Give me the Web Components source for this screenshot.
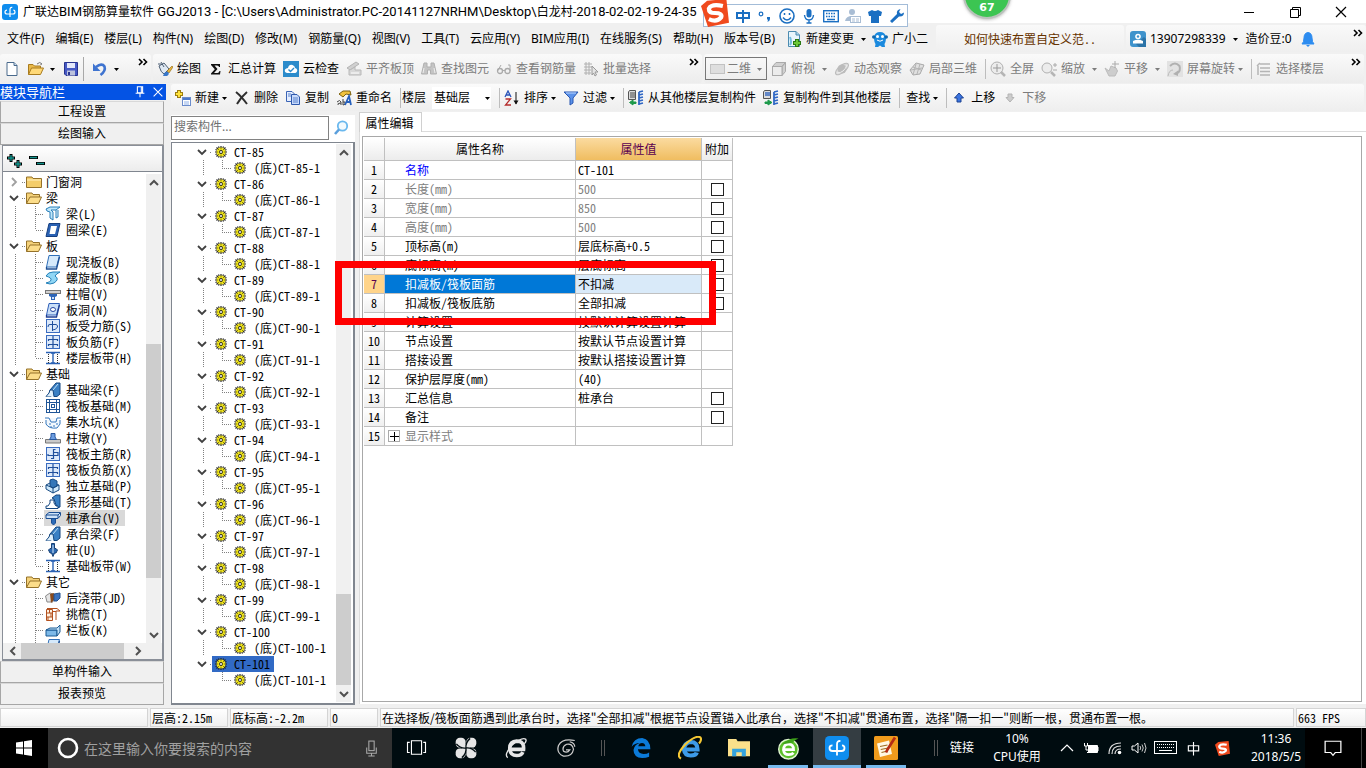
<!DOCTYPE html>
<html lang="zh-CN">
<head>
<meta charset="utf-8">
<title>广联达BIM钢筋算量软件 GGJ2013</title>
<style>
html, body { margin: 0; height: 100%; }
body { font: 12px/16px "Noto Sans", "Noto Sans CJK SC", sans-serif; color: #000; overflow: hidden; }
</style>
</head>
<body>
<app-window></app-window>
<script>
const ICONS = {
  logo: '<rect width="16" height="16" rx="3" fill="#0f8dee"/><path d="M5 6.200Q3 6.200 3 8Q3 10 5 10H11Q13 10 13 8Q13 6.200 11.300 6.200M10.300 3.400Q8 3 8 5.500V13" fill="none" stroke="#fff" stroke-width="1.200"/>',
  page: '<path d="M3 1.500H10L13 4.500V14.500H3Z" fill="#fff" stroke="#4a6a8c"/><path d="M10 1.500V4.500H13" fill="#c8dcf0" stroke="#4a6a8c"/>',
  open: '<path d="M0.500 13.500V3.500H5L6.500 5H12.500V7" fill="#e9b94a" stroke="#a87b1e"/><path d="M0.500 13.500L3.500 7H15.500L12.500 13.500Z" fill="#ffd978" stroke="#a87b1e"/><path d="M9 3Q12 0 14 3L12.500 3.500" fill="none" stroke="#777"/>',
  save: '<path d="M1.500 1.500H14.500V14.500H3L1.500 13Z" fill="#4659c4" stroke="#28338e"/><rect x="4" y="2" width="8" height="5" fill="#e4e8fa"/><rect x="4" y="9.500" width="8" height="5" fill="#bcc2dc"/><rect x="5" y="11" width="2" height="3" fill="#28338e"/>',
  undo: '<path d="M4 6Q10 1.500 12.500 5.500Q14 10 8.500 14" fill="none" stroke="#3f74d0" stroke-width="2.600"/><path d="M1 2.500V10H8.500Z" fill="#3f74d0"/>',
  paint: '<path d="M2 5L7 2L12 8L7 13Q4 12 2 5Z" fill="#dfe8f2" stroke="#4d5f74"/><path d="M4 1L7 6M1 3H4" stroke="#4d5f74"/><path d="M15 5L10 10L12 12L16 6Z" fill="#e8b43a" stroke="#8b6516" stroke-width=".6"/><path d="M6 15Q8 10 11 11Q13 13 10 15Z" fill="#3977c9"/>',
  sigma: '<path d="M3 3H12V6H11Q11 4.500 9 4.500H6.500L9.500 8L6 12H9.500Q11 12 11.500 10H12.500L12 13.500H3V12.500L6.800 8.300L3 4Z" fill="#111"/>',
  cloud: '<rect width="16" height="16" fill="#2b8bcb"/><path d="M4 12Q1 11 2 8.500Q3 7 5 7Q6 3 9.500 4Q12 5 12 7Q15 8 14 10.500Q13 12 12 12Z" fill="#fff"/><path d="M5.500 8.500L7.500 10.500L11 7" fill="none" stroke="#2b8bcb" stroke-width="1.400"/>',
  align: '<path d="M1 7L10 1L13 3L4 9Z" fill="#d0d0d0" stroke="#b4b4b4"/><path d="M3 9V14H15V9H9V6L5 8.500Z" fill="#d8d8d8" stroke="#b8b8b8"/><path d="M5 12H13" stroke="#fff"/>',
  binoc: '<path d="M3 2H6V6H10V2H13L15.500 13H9.500V9H6.500V13H.5Z" fill="#c4c4c4" stroke="#b0b0b0"/><path d="M3 7L2 12M13 7L14 12" stroke="#eee"/>',
  glasses: '<circle cx="4" cy="10" r="2.500" fill="none" stroke="#aaa" stroke-width="1.300"/><circle cx="11.500" cy="10" r="2.500" fill="none" stroke="#aaa" stroke-width="1.300"/><path d="M6.500 9.500H9M1.500 10L5 4M14 10V4H12" fill="none" stroke="#aaa"/>',
  batch: '<path d="M1 3H9M1 6H9M1 9H8M1 12H8M3 1V14M6 1V14" stroke="#b0b0b0"/><path d="M9 5L15 11H12L13.500 14L12 15L10.500 12L9 14Z" fill="#e4e4e4" stroke="#999"/>',
  flat: '<rect x="1.500" y="3.500" width="14" height="9" fill="#dedede" stroke="#c2c2c2"/>',
  cube: '<path d="M1.500 5.500L5 1.500H14.500L11 5.500ZM11 5.500L14.500 1.500V10.500L11 14.500Z" fill="#d0d0d0" stroke="#aaa"/><rect x="1.500" y="5.500" width="9.500" height="9" fill="#ececec" stroke="#aaa"/>',
  orbit: '<ellipse cx="8" cy="8" rx="8" ry="3.500" transform="rotate(-40 8 8)" fill="#dcdcdc" stroke="#bbb"/><circle cx="8" cy="8" r="4.500" fill="#bcbcbc"/><path d="M3 12Q10 12 13 4" stroke="#eee" fill="none"/>',
  local3d: '<path d="M1 9L7 2L15 4L11 13L4 14Z" fill="#e0e0e0" stroke="#aaa"/><path d="M4 6L12 9M7 3L4 14M11 3L8 13M2 9L13 7" stroke="#b4b4b4" fill="none"/>',
  full: '<circle cx="7" cy="7" r="6" fill="#ececec" stroke="#b0b0b0"/><path d="M7 3V11M3 7H11" stroke="#999"/><path d="M11 11L15 15" stroke="#b5b5b5" stroke-width="2.500"/>',
  zoom: '<circle cx="6" cy="7" r="5" fill="#ececec" stroke="#b0b0b0"/><path d="M10 11L14 15" stroke="#b5b5b5" stroke-width="2.500"/><path d="M12 4H16M14 2V6M12 9H16" stroke="#aaa"/>',
  pan: '<path d="M1 7L5 10L7 5L12 7L13.500 10L11 15H5Z" fill="#cdcdcd" stroke="#bbb"/><path d="M11 0V7M8 3H15" stroke="#aaa"/>',
  rotate: '<rect x="0" y="0" width="16" height="16" fill="#e2e2e2"/><path d="M3 5Q8 0 12.500 5Q14 10 10 12.500" fill="none" stroke="#b0b0b0" stroke-width="2"/><path d="M11 9.500V15L6 13Z" fill="#b0b0b0"/><path d="M1 15Q2 9 6 9" stroke="#bbb" fill="none"/>',
  floors: '<path d="M4 3H14M4 7H14M4 10.500H14M4 14H14M1 5L4 2M2 5V14" stroke="#b5b5b5" stroke-width="1.500" fill="none"/>',
  create: '<path d="M4 0V8M0 4H8" stroke="#9c7d12" stroke-width="4"/><path d="M4 1V7M1 4H7" stroke="#ffe23b" stroke-width="2"/><rect x="7.500" y="7.500" width="8" height="8" fill="#fff" stroke="#6b8ccc"/><path d="M8 9H15" stroke="#4a78cc" stroke-width="2"/><path d="M9 12H14M9 14H14" stroke="#8fb0e8"/>',
  del: '<path d="M2 2Q7 6 13 14M13 2Q7 7 3 14" stroke="#2e2e2e" stroke-width="2" fill="none"/>',
  copy: '<path d="M1.500 1.500H7L9.500 4V11.500H1.500Z" fill="#e3edff" stroke="#3b64b5"/><path d="M6.500 4.500H12L14.500 7V14.500H6.500Z" fill="#c7dafc" stroke="#2e58ac"/><path d="M8 8H13M8 10H13M8 12H13M3 4H6M3 6H6" stroke="#5a82cc"/>',
  rename: '<path d="M3 4L7 1H14L15 5L10 4L7 7Z" fill="#f0c23e" stroke="#7c610f"/><path d="M1 12Q4 9 5 12V15M5 13Q1 13 2 15M7 9V15Q10 15 9 12H7" fill="none" stroke="#444"/><path d="M9 15L13 6L15 15M10 12H15" fill="none" stroke="#2761bd" stroke-width="1.800"/>',
  sort: '<path d="M1 7L4 1L7 7M2 5H6" fill="none" stroke="#2953b8" stroke-width="1.300"/><path d="M1.500 9H6.500L1.500 15H7" fill="none" stroke="#b52c2c" stroke-width="1.300"/><path d="M12 2V14" stroke="#111"/><path d="M9.500 10.500H14.500L12 14.500Z" fill="#111"/>',
  filter: '<path d="M1 2H15L10 8V13L7 15V8Z" fill="#5b92ea" stroke="#2956b0"/><path d="M3 3H13" stroke="#bcd6ff"/>',
  copyfrom: '<path d="M1.500 0.500H7.500V9.500H0.500V2Z" fill="#ddd" stroke="#555"/><path d="M2 3H7M2 5H7M2 7H7" stroke="#444"/><path d="M11 2L15 1M11 5L15 4M11 8L15 7M11 11L15 10M11 14L15 13M11 2V15" stroke="#2e66c4" stroke-width="1.800"/><path d="M8 12H5V10L1.500 12.500L5 15V13.500H8Z" fill="#1d9a4b" stroke="#1d9a4b"/>',
  copyto: '<path d="M1.500 0.500H7.500V8.500H0.500V2Z" fill="#ddd" stroke="#555"/><path d="M2 3H7M2 5H7" stroke="#3c6cc0" stroke-width="1.500"/><path d="M11 2L15 1M11 5L15 4M11 8L15 7M11 11L15 10M11 14L15 13M11 2V15" stroke="#2e66c4" stroke-width="1.800"/><path d="M2 12H5V10L9 12.500L5 15V13.500H2Z" fill="#1d9a4b" stroke="#1d9a4b"/>',
  up: '<path d="M8 3L12.500 8H10V12H6V8H3.500Z" fill="#3b74e0" stroke="#1d4291"/>',
  down: '<path d="M8 12L12 7.500H10V4H6V7.500H4Z" fill="#ccc" stroke="#b4b4b4"/>',
  change: '<path d="M2.500 0.500H10L13.500 4V15.500H2.500Z" fill="#e8f5fc" stroke="#4c8bb0"/><path d="M10 0.500V4H13.500" fill="#a9d2ea" stroke="#4c8bb0"/><path d="M4 6Q6 11 4 14" stroke="#72bce0" fill="none" stroke-width="2"/><path d="M11 8V16M7 12H15" stroke="#2b7a15" stroke-width="4"/><path d="M11 9V15M8 12H14" stroke="#6cc938" stroke-width="2"/>',
  mascot: '<path d="M8 1Q13 1 14 6Q14 11 12.500 13L13 16H10L8 14.500L6 16H3L3.500 13Q2 11 2 6Q3 1 8 1Z" fill="#1b8ade"/><circle cx="1.800" cy="6" r="1.800" fill="#0f68ae"/><circle cx="14.200" cy="6" r="1.800" fill="#0f68ae"/><circle cx="5.500" cy="5.500" r="1.500" fill="#fff"/><circle cx="10.500" cy="5.500" r="1.500" fill="#fff"/><path d="M5 9Q8 11.500 11 9" stroke="#fff" fill="none"/>',
  user: '<rect width="16" height="16" rx="3" fill="#3f93cc"/><path d="M6 13L14 6L16 8V16H9Z" fill="#2c74a8"/><circle cx="8" cy="5.500" r="2.800" fill="#fff"/><path d="M3 12.500V10Q8 7.500 13 10V12.500Z" fill="#fff"/><circle cx="8" cy="5.500" r="1.200" fill="#3f93cc"/>',
  bell: '<path d="M2 13Q4 11 4 7Q4 2 8 1.500Q12 2 12 7Q12 11 14 13Z" fill="#2d8cf0" stroke="#2d8cf0"/><path d="M6 14H10L8 16Z" fill="#2d8cf0"/>',
  folder: '<path d="M0.500 3H6L7 4.500H15.500V13.500H0.500Z" fill="#f4cd6a" stroke="#95722a"/><path d="M1 6H15" stroke="#fff2c4"/>',
  folderopen: '<path d="M0.500 13.500V3H6L7 4.500H13.500V7" fill="#f5d27a" stroke="#95722a"/><path d="M0.500 13.500L4 7H15.500L12.500 13.500Z" fill="#fcdd8a" stroke="#95722a"/>',
  beam: '<path d="M1 3L5 1H15L11 4H6L8 6V14L5 12V6L2 5Z" fill="#bfe6fa" stroke="#2a7fb8"/><path d="M11 4V12L13 11V4" fill="#e2f5fd" stroke="#2a7fb8"/>',
  ring: '<path d="M4 1.500H15L12 14.500H1Z" fill="#2a62b4" stroke="#163f80"/><path d="M6 4H12L10 12H4.500Z" fill="#fff"/>',
  slab: '<path d="M4 1.500H14.500L11.500 13H1.500Z" fill="#d5e9fb" stroke="#2f6fb8"/><path d="M1.500 13V15H11.500L14.500 3" fill="none" stroke="#1f4f94" stroke-width="1.300"/>',
  spiral: '<path d="M1 6Q3 2 8 2H15Q11 4 10 6Q15 9 9 13Q5 15 1 13Q6 12 6 10Q7 8 1 6Z" fill="#8fd6f5" stroke="#2480b8"/>',
  cap: '<rect x="0.500" y="4.500" width="15" height="3" fill="#d0d0d0" stroke="#777"/><path d="M4 8H12V10L10 11V14H6V11L4 10Z" fill="#2c65b8"/><rect x="7" y="11" width="2" height="2" fill="#cfe0f5"/>',
  hole: '<path d="M4 1.500H14.500L11.500 13H1.500Z" fill="#c9dff8" stroke="#2f5fb8"/><path d="M1.500 13V15H11.500L14.500 3" fill="none" stroke="#1f3f94" stroke-width="1.300"/><ellipse cx="8" cy="7.500" rx="2.500" ry="2" fill="#fff" stroke="#2647a0"/>',
  force: '<rect x="1.500" y="1.500" width="13" height="13" fill="#dce9fa" stroke="#3a6cc0"/><path d="M7.500 3V13M3 9Q3 6 5 6.500H11Q13 7 12.500 9Q11 12 7.500 12" fill="none" stroke="#1f4f9c"/>',
  rebar: '<rect x="1.500" y="1.500" width="13" height="13" fill="#dce9fa" stroke="#3a6cc0"/><path d="M8.500 3V13M3 8V9.500H13V6.500H8.500M10.500 3.500H8.500M6 12.500H8.500" fill="none" stroke="#1f4f9c" stroke-width="1.200"/>',
  negbar: '<rect x="1.500" y="1.500" width="13" height="13" fill="#dce9fa" stroke="#3a6cc0"/><path d="M8 2V14M3.500 7V5.500H12.500V7M3.500 12V10.500H12.500V12" fill="none" stroke="#1f4f9c" stroke-width="1.200"/>',
  strip: '<path d="M1 2.500H15M1 13.500H15" stroke="#2a62b4" stroke-width="1.600"/><path d="M8 3V13M6 3H10M6 13H10" stroke="#2a62b4" stroke-width="1.400"/><path d="M3.500 4V13M12.500 4V13" stroke="#333" stroke-dasharray="1 1"/>',
  foundbeam: '<path d="M1 14.500H5V8L11 1H15V12L12 14.500H9L7 12L6 14.500Z" fill="#3a80c4" stroke="#154780"/><path d="M1 14.500L4 11L5 8L8 8L9 14.500" fill="#dff0fc" stroke="#154780"/><path d="M8 8L13 2" stroke="#bfe0f7"/>',
  raft: '<rect x="1.500" y="1.500" width="13" height="13" fill="#fff" stroke="#1f5596"/><path d="M4.500 1V15M11.500 1V15M1 4.500H15M1 11.500H15" stroke="#1f5596"/><rect x="6.500" y="6.500" width="3" height="3" fill="none" stroke="#1f5596"/>',
  pit: '<path d="M1 6V10Q4 15 12 14L15 10V6M0 4H4L6 8H11L12 4H16" fill="#f2f8fd" stroke="#3477bd"/><path d="M4 10H6M8 12H10M11 10H13M5 13H7" stroke="#3477bd"/>',
  pier: '<path d="M0.500 9.500H15.500V13H0.500Z" fill="#c9c9c9" stroke="#777"/><path d="M4.500 9.500L6 7V3.500H10V7L11.500 9.500Z" fill="#6c9de0" stroke="#28579e"/>',
  isolated: '<path d="M1 7L5 5L14 7V12L8 15L1 11Z" fill="#cfe8fa" stroke="#174a82"/><path d="M5 2L8 1L12 3V8L8 10L5 8Z" fill="#3677b8" stroke="#174a82"/><path d="M1 7L8 10V15M8 10L14 7" fill="none" stroke="#174a82"/>',
  stripf: '<path d="M7 4L11 1H15V13L12 14L9 5Z" fill="#3a80c4" stroke="#154780"/><path d="M1 14.500V12H3L5 9V6H9V9L11 12H13V14.500Z" fill="#fff" stroke="#154780"/>',
  pilecap: '<path d="M1 5L4 2.500H15.500V5.500L13 8.500H1Z" fill="#cfe3f8" stroke="#1b4f94"/><path d="M1 5H13V8M13 5L15 3" stroke="#1b4f94" fill="none"/><path d="M6.500 8.500H10.500V13L8.500 15L6.500 13Z" fill="#2d6cb8" stroke="#1b4f94"/>',
  pile: '<path d="M6.500 1.500H9.500V6.500H11L12.500 8L11 11H9.500L8 14.500L6.500 11H5L3.500 8L5 6.500H6.500Z" fill="#2b69b2" stroke="#163f74"/><path d="M8 3V11" stroke="#d6e8fa"/>',
  pour: '<path d="M0.500 6L5 3L8 4V12H2Z" fill="#e4e4e4" stroke="#8a8a8a"/><path d="M5 4L9 3V10L6 13Z" fill="#8a4b1c"/><path d="M9 4L15 3V8L12 11H9Z" fill="#3b72bd" stroke="#23518e"/>',
  eave: '<path d="M1.500 3.500H7.500V14.500H1.500Z" fill="#fff2e2" stroke="#b3501e"/><path d="M1 7H8M1 11H8M4.500 4V7M6 7V11M3 11V14" stroke="#b3501e"/><path d="M2 2.500H12L15 5H11V14M7.500 5.500H11" fill="none" stroke="#b3501e"/>',
  rail: '<path d="M1 8H12V14H1Z" fill="#7db9e8" stroke="#1b5a94"/><path d="M1 8L5 6H12L15 3V10L12 14V8Z" fill="#bfe0f7" stroke="#1b5a94"/>',
  gear: '<path d="M8 2V14M2 8H14M3.500 3.500L12.500 12.500M12.500 3.500L3.500 12.500M5.500 2.500L10.500 13.500M10.500 2.500L5.500 13.500M2.500 5.500L13.500 10.500M2.500 10.500L13.500 5.500" stroke="#222" stroke-width="1.200"/><circle cx="8" cy="8" r="4.500" fill="#f4e81a"/><path d="M8 3V13M3 8H13M4.500 4.500L11.500 11.500M11.500 4.500L4.500 11.500" stroke="#3a370a" stroke-width=".6"/><circle cx="8" cy="8" r="2.800" fill="#f4e81a"/><circle cx="8" cy="8" r="1.900" fill="#222"/><circle cx="8" cy="8" r="1" fill="#fff"/>',
  search: '<circle cx="9.500" cy="6" r="4.700" fill="#f2fafe" stroke="#6ab8ee" stroke-width="1.800"/><path d="M6 9.500L2 14" stroke="#5a9fdc" stroke-width="2.600"/>',
  expand: '<path d="M4 0V8M0 4H8M11 6V14M7 10H15" stroke="#000" stroke-width="3"/><path d="M4 1V7M1 4H7M11 7V13M8 10H14" stroke="#12928a" stroke-width="1.400"/>',
  collapse: '<path d="M0 3.500H9M7 9.500H16" stroke="#000" stroke-width="3"/><path d="M1 3.500H8M8 9.500H15" stroke="#12928a" stroke-width="1.400"/>',
  sogou: '<path d="M3.500 1L14.500 0L16 13.500L4 16L0 4Z" fill="#f04a1e"/><path d="M12.500 4Q6 2.500 4.500 5.500Q4.500 8 8 8Q12.500 8 11.500 10.500Q9 13.500 4.500 11.500" fill="none" stroke="#fff" stroke-width="2.400"/>',
  zhong: '<path d="M2 5H14V10H2ZM8 2V15" fill="none" stroke="#1b6fc2" stroke-width="2"/>',
  comma: '<circle cx="4" cy="6" r="1.800" fill="none" stroke="#1b6fc2" stroke-width="1.200"/><path d="M10 9H13V11Q13 13 10.500 14L11 11.500H10Z" fill="#1b6fc2"/>',
  smile: '<circle cx="8" cy="8" r="7" fill="none" stroke="#1b6fc2" stroke-width="1.600"/><path d="M5.500 5V7M10.500 5V7M4 9.500Q8 14.500 12 9.500" fill="none" stroke="#1b6fc2" stroke-width="1.500"/>',
  mic: '<rect x="5.500" y="1" width="5" height="8.500" rx="2.500" fill="#1b6fc2"/><path d="M3.500 7Q4 12 8 12Q12 12 12.500 7M8 12V15M5.500 15H10.500" fill="none" stroke="#1b6fc2" stroke-width="1.400"/>',
  keys: '<rect x="0.700" y="2.700" width="14.600" height="11" fill="none" stroke="#1b6fc2" stroke-width="1.400"/><path d="M3 5.500H13M3 8.500H13" stroke="#1b6fc2" stroke-width="1.500" stroke-dasharray="1.500 1"/><path d="M4 11.500H12" stroke="#1b6fc2" stroke-width="1.500"/>',
  idcard: '<circle cx="7" cy="4" r="3" fill="#a9bdd4"/><path d="M0 13Q1 8 7 8V13Z" fill="#a9bdd4"/><rect x="5.500" y="8.500" width="10" height="6" fill="#fff" stroke="#a9bdd4"/><path d="M7 11H10M11 11H14M7 13H10M11 13H14" stroke="#a9bdd4"/>',
  shirt: '<path d="M1 4L5 2Q8 4 11 2L15 4L14 8H12V15H4V8H2Z" fill="#1b6fc2"/>',
  wrench: '<path d="M1 13L8 6Q7 2 11.500 1L10 4L12 6L15 4.500Q15 9 10 8.500L3 15Z" fill="#1b6fc2"/>',
  win: '<path d="M0 2.500L7 1.500V7.500H0ZM8 1.300L16 0V7.500H8ZM0 8.500H7V14.500L0 13.500ZM8 8.500H16V16L8 14.700Z" fill="#fff"/>',
  taskview: '<path d="M4.500 1.500H13.500V13.500H4.500ZM3 3H1V12H3M15 3H17V12H15" fill="none" stroke="#fff" stroke-width="1"/>',
  pinwheel: '<g fill="#e6e6e6"><rect x="0.500" y="0.500" width="7.200" height="7.200" rx="3"/><rect x="8.300" y="0.500" width="7.200" height="7.200" rx="3"/><rect x="0.500" y="8.300" width="7.200" height="7.200" rx="3"/><rect x="8.300" y="8.300" width="7.200" height="7.200" rx="3"/><circle cx="8" cy="8" r="3"/></g><path d="M8 8Q4 8.500 1 5M8 8Q7.500 4 11 1M8 8Q12 7.500 15 11M8 8Q8.500 12 5 15" stroke="#000c10" stroke-width="1" fill="none"/>',
  ewhite: '<path d="M3.500 9H13.500Q14 3 8.500 3Q3 3.500 3.500 9Q4 13.500 8.500 13.500Q12 13.500 13 11" fill="none" stroke="#e6e6e6" stroke-width="2.600"/><path d="M2 15Q-1 13 5 6Q12 0 15 1.500Q16 3 14 5" fill="none" stroke="#e6e6e6"/>',
  swirl: '<path d="M15 2Q5 0 2 6Q0 12 6 14.500Q13 15 14 9Q13 4 8.500 5Q4.500 7 6 10.500Q9 12.500 11 9.500H8M11 3Q15 4 15 7" fill="none" stroke="#ccc" stroke-width="1"/>',
  edge: '<path d="M0.500 7Q2 0 9 0Q15.500 1 15.500 9H5.500Q6 12.500 10 12.800Q13 12.800 14.500 11.500V15Q12 16 9 16Q2 15.500 2 9.500Q3 5 7 4Q3 4 0.500 7ZM5.800 6.500H11.500Q11 4 8.800 4Q6.500 4 5.800 6.500Z" fill="#0b7ad8" fill-rule="evenodd"/>',
  ie: '<path d="M4 9H13Q13 4 8.500 4Q4 4.500 4 9Q4.500 13 8.500 13Q12 13 12.500 11" fill="none" stroke="#3d9ae8" stroke-width="2.800"/><path d="M2 15Q-2 13 5 5.500Q12 -1 15 1Q16 2.500 14 5" fill="none" stroke="#f5c834" stroke-width="1.400"/>',
  explorer: '<path d="M0 1.500H6L7 3H16V14H0Z" fill="#fbe08a"/><path d="M3 14V8.500H13V14H10V11H6V14Z" fill="#35a3dd"/>',
  egreen: '<circle cx="8" cy="8.500" r="6.800" fill="#5cbf2a" stroke="#dff5d0"/><path d="M4.500 8.800H11.500Q11.500 5 8 5Q4.800 5 4.500 9Q5 12.300 8 12.300Q10.500 12.300 11.500 11" fill="none" stroke="#fff" stroke-width="1.900"/><path d="M3.500 5Q9 0 15 1Q12 2 11 4" fill="#3ea31a"/>',
  editor: '<rect width="16" height="16" rx="1" fill="#f09b1c"/><path d="M2 5L10 3L12 12L4 14Z" fill="#fff8e2"/><path d="M4 7L9 6M4.500 9L9.500 8M5 11L9 10" stroke="#a06c20" stroke-width=".8"/><path d="M14 1L9 9L8 11" stroke="#b52c14" stroke-width="1.800" fill="none"/>',
  caret: '<path d="M2 11L8 5L14 11" fill="none" stroke="#fff" stroke-width="1.200"/>',
  battery: '<path d="M5 6H14V12H5Z" fill="#fff"/><path d="M15 7V11M5 5.500H14.500V12.500H4" stroke="#fff" fill="none"/><path d="M1.500 3V6H4.500V3M3 6V10H5" stroke="#fff" fill="none"/>',
  wifi: '<path d="M2 14Q2 3 14 3M5 14Q5 6 14 6M8 14Q8 9 14 9" fill="none" stroke="#ddd" stroke-width="1.200"/><circle cx="12.500" cy="12.500" r="1.800" fill="#fff"/>',
  speaker: '<path d="M1 6H3.500L7 3V13L3.500 10H1Z" fill="none" stroke="#fff"/><path d="M9 6Q10.500 8 9 10M11 4.500Q13.500 8 11 11.500M13.500 3Q16.500 8 13.500 13" fill="none" stroke="#ccc"/>',
  kbd: '<rect x="0.500" y="1.500" width="22" height="12" fill="none" stroke="#fff"/><path d="M3 4.500H20M3 7.500H20" stroke="#fff" stroke-dasharray="1 1"/><path d="M5 10.500H18" stroke="#fff"/>',
  zhongw: '<path d="M2.500 5H13.500V10.500H2.500ZM8 1V15.500" fill="none" stroke="#fff" stroke-width="1.200"/>',
  note: '<path d="M1 2H15V12H10L8 14.500L6 12H1Z" fill="none" stroke="#fff" stroke-width="1.100"/>',
  micline: '<rect x="5.500" y="1" width="5" height="9" fill="none" stroke="#aaa"/><path d="M3.500 7V12.500H12.500V7M8 12.500V15M5 15H11" fill="none" stroke="#aaa"/>',
  pin: '<path d="M5 2H11V9H5ZM9.500 2V9M3 9.500H13M8 10V14" fill="none" stroke="#fff" stroke-width="1.200"/>',
  cross: '<path d="M3 3L13 13M13 3L3 13" fill="none" stroke="currentColor" stroke-width="1.200"/>',
  min: '<path d="M3 8.500H13" stroke="#000"/>',
  max: '<path d="M3.500 5.500H11.500V13.500H3.500ZM5.500 5V3.500H13.500V11.500H12" fill="none" stroke="#000"/>',
  more: '<path d="M4 5L7 8L4 11M8.500 5L11.500 8L8.500 11" fill="none" stroke="#000" stroke-width="1.600"/>'
};
const VIEW = { taskview: '0 0 18 16', kbd: '0 0 23 16' };
const icon = (name, w = 16, h = w) =>
  `<svg class="ic" width="${w}" height="${h}" viewBox="${VIEW[name] || '0 0 16 16'}" aria-hidden="true">${ICONS[name]}</svg>`;
const caret = (w, x) => `<svg class="ic" width="${w}" height="16" viewBox="0 0 ${w} 16" aria-hidden="true"><path d="M${x} 7H${x + 5}L${x + 2.5} 10Z" fill="currentColor"/></svg>`;

const BASE = `
*{box-sizing:border-box}
.ic{display:block;flex:none}
button,input,select{font:inherit;color:inherit;margin:0;padding:0;border:0;background:none;border-radius:0;outline:0}
.cjk{font-family:"Noto Sans CJK SC",sans-serif}
.sim{font-family:"Noto Sans CJK SC",sans-serif;font-feature-settings:"hwid" 1}
`;
class UIElement extends HTMLElement {
  connectedCallback() {
    if (this.shadowRoot) return;
    const t = document.createElement('template');
    t.innerHTML = `<style>${BASE}${this.constructor.css}</style>${this.render()}`;
    this.attachShadow({ mode: 'open' }).append(t.content.cloneNode(true));
  }
}
const define = (name, css, render) => customElements.define(name, class extends UIElement {
  static css = css;
  render() { return render(this); }
});

define('tool-button', `
:host{display:block;flex:none}
button{display:flex;align-items:center;height:20px;white-space:nowrap;line-height:20px}
.ic:first-child{margin-right:4px}
button:disabled{color:#7c7c7c}
`, el => {
  const a = el.getAttribute('arrow');
  return `<button type="button" ${el.hasAttribute('off') ? 'disabled' : ''}>${el.getAttribute('icon') ? icon(el.getAttribute('icon')) : ''}<span><slot></slot></span>${a ? (a === 'far' ? caret(12, 7) : caret(8, 3)) : ''}</button>`;
});

define('tool-sep', `:host{display:block;flex:none;width:1px;height:20px;background:#bdbdbd;margin:0 -3px 0 1px}`, () => '');

define('title-bar', `
:host{display:flex;align-items:center;height:23px;background:#fff;padding:0 17px 0 2px;position:relative}
h1{font:13px/20px Roboto,"Noto Sans CJK SC",sans-serif;margin:0 0 0 5px;flex:1;min-width:0;white-space:nowrap}
h1 span{font-size:12px}
.win{display:flex;gap:30px}
.win button{display:block}
.ime{position:absolute;left:703px;top:4px;z-index:5;height:23px;width:205px;border:1px solid #a3bcd8;background:#fff;display:flex;align-items:center;gap:6px;padding-left:31px}
.ime .big{position:absolute;left:-3px;top:-6px}
.ball{position:absolute;left:963px;top:-29px;width:48px;height:48px;border-radius:50%;background:#3cc552;border:2px solid #b9c2bb;box-shadow:0 1px 3px #8888;color:#fff;font:bold 11px/14px "DejaVu Sans",sans-serif;text-align:center;padding-top:28px;z-index:5}
`, () => `${icon('logo')}<h1><span>广联达</span>BIM<span>钢筋算量软件</span> GGJ2013 - [C:\\Users\\Administrator.PC-20141127NRHM\\Desktop\\<span>白龙村</span>-2018-02-02-19-24-35</h1>
<div class="ime"><span class="big">${icon('sogou', 28, 28)}</span>${['zhong','comma','smile','mic','keys','idcard','shirt','wrench'].map(n => `<button type="button" aria-label="${n}">${icon(n)}</button>`).join('')}</div>
<div class="ball">67</div>
<div class="win"><button type="button" aria-label="最小化">${icon('min')}</button><button type="button" aria-label="还原">${icon('max')}</button><button type="button" aria-label="关闭">${icon('cross')}</button></div>`);

define('menu-bar', `
:host{display:flex;align-items:center;height:31px;background:#f0f0f0}
nav{display:flex;gap:11px;padding:0 11px 0 7px;flex:none}
nav button{white-space:nowrap;line-height:20px}
.pair{display:flex;gap:6px;flex:1;min-width:0}
.tip,.acct{height:27px;display:flex;align-items:center;background:linear-gradient(#f9f9f9,#efefef);border-radius:3px;flex:none}
.tip{width:188px;margin:0 2px 0 0;justify-content:center;color:#630}
.tip a{color:inherit;text-decoration:none}
.acct{width:240px;padding-left:4px}
.acct span{margin-left:8px}
.bell{margin-left:8px}
.more{margin-left:auto;align-self:flex-start}
`, () => `<nav>${['文件(F)','编辑(E)','楼层(L)','构件(N)','绘图(D)','修改(M)','钢筋量(Q)','视图(V)','工具(T)','云应用(Y)','BIM应用(I)','在线服务(S)','帮助(H)','版本号(B)'].map(t => `<button type="button">${t}</button>`).join('')}</nav>
<div class="pair"><tool-button icon="change" arrow="far">新建变更</tool-button><tool-button icon="mascot">广小二</tool-button></div>
<div class="tip"><a href="#" class="sim">如何快速布置自定义范..</a></div>
<div class="acct"><tool-button icon="user" arrow="far">13907298339</tool-button><span>造价豆:0</span><button type="button" class="bell" aria-label="通知">${icon('bell')}</button><button type="button" class="more" aria-label="更多">${icon('more')}</button></div>`);

define('main-tools', `
:host{display:flex;height:29px;background:#f0f0f0;gap:2px;padding-right:2px}
.a,.b,.c{display:flex;align-items:center;gap:7px;background:linear-gradient(#fafafa,#ececec);border-radius:3px}
.a{width:151px;flex:none;padding-left:4px;gap:4px}
.b{width:549px;flex:none;padding-left:4px}
.c{flex:1;padding-left:1px;min-width:0}
.more{margin-left:auto;align-self:flex-start}
.bar{width:1px;height:24px;background:#a8a8a8;margin:0 4px 0 0}
.a button{display:flex}
.dd{display:flex;align-items:center;width:62px;height:23px;border:1px solid #777;padding-left:3px;margin-right:-3px;color:#7c7c7c}
select{appearance:none;flex:1;padding-left:2px;line-height:20px}
`, () => `<div class="a"><button type="button" aria-label="新建工程">${icon('page')}</button><button type="button" aria-label="打开" style="margin-left:4px">${icon('open')}${caret(12,6)}</button><button type="button" aria-label="保存" style="margin-left:3px">${icon('save')}</button><i class="bar"></i><button type="button" aria-label="撤销">${icon('undo')}${caret(12,6)}</button><button type="button" class="more" aria-label="更多">${icon('more')}</button></div>
<div class="b"><tool-button icon="paint">绘图</tool-button><tool-button icon="sigma">汇总计算</tool-button><tool-button icon="cloud">云检查</tool-button><tool-button off icon="align">平齐板顶</tool-button><tool-button off icon="binoc">查找图元</tool-button><tool-button off icon="glasses">查看钢筋量</tool-button><tool-button off icon="batch">批量选择</tool-button><button type="button" class="more" aria-label="更多">${icon('more')}</button></div>
<div class="c"><div class="dd">${icon('flat')}<select aria-label="视图维度"><option>二维</option></select>${caret(12,3)}</div><tool-button off icon="cube" arrow="far">俯视</tool-button><tool-button off icon="orbit">动态观察</tool-button><tool-button off icon="local3d">局部三维</tool-button><tool-sep></tool-sep><tool-button off icon="full">全屏</tool-button><tool-button off icon="zoom" arrow="far">缩放</tool-button><tool-button off icon="pan" arrow="far">平移</tool-button><tool-button off icon="rotate" arrow="near">屏幕旋转</tool-button><tool-sep></tool-sep><tool-button off icon="floors">选择楼层</tool-button><button type="button" class="more" aria-label="更多">${icon('more')}</button></div>`);

define('component-tools', `
:host{display:flex;align-items:center;gap:7px;height:27px;padding-left:4px;margin-right:2px;background:linear-gradient(#fbfbfb,#eee);border-radius:3px}
.lv{display:flex;align-items:center;gap:6px;margin-left:-3px;flex:none}
.dd{display:flex;align-items:center;width:59px;height:22px;background:#fff}
select{appearance:none;flex:1;padding-left:2px;line-height:20px}
.find{margin-left:2px}
`, () => `<tool-button icon="create" arrow="near">新建</tool-button><tool-button icon="del">删除</tool-button><tool-button icon="copy">复制</tool-button><tool-button icon="rename">重命名</tool-button><tool-sep></tool-sep><div class="lv"><label for="floor">楼层</label><div class="dd"><select id="floor"><option>基础层</option></select>${caret(12,6)}</div></div><tool-sep></tool-sep><tool-button icon="sort" arrow="near">排序</tool-button><tool-button icon="filter" arrow="near">过滤</tool-button><tool-sep></tool-sep><tool-button icon="copyfrom">从其他楼层复制构件</tool-button><tool-button icon="copyto">复制构件到其他楼层</tool-button><tool-sep></tool-sep><tool-button class="find" arrow="near">查找</tool-button><tool-sep></tool-sep><tool-button icon="up">上移</tool-button><tool-button off icon="down">下移</tool-button>`);

define('scroll-bar', `
:host{display:flex;flex-direction:column;width:15px;background:#f0f0f0;flex:none}
:host([dir=h]){flex-direction:row;width:auto;height:16px}
i{display:block;flex-basis:0}
.t{background:#cdcdcd}
.ic{margin:0 auto}
button{flex:none;height:17px;width:15px;display:flex;align-items:center}
:host([dir=h]) button{width:17px;height:16px}
`, el => {
  const [a, b, c] = el.getAttribute('parts').split(' ');
  const h = el.getAttribute('dir') === 'h';
  const arrow = d => `<svg class="ic" width="10" height="10" viewBox="0 0 10 10"><path d="${d}" fill="none" stroke="#505050" stroke-width="2"/></svg>`;
  return `<button type="button" aria-label="向前">${arrow(h ? 'M7 1L3 5L7 9' : 'M1 7L5 3L9 7')}</button><i style="flex-grow:${a}"></i><i class="t" style="flex-grow:${b}"></i><i style="flex-grow:${c}"></i><button type="button" aria-label="向后">${arrow(h ? 'M3 1L7 5L3 9' : 'M1 3L5 7L9 3')}</button>`;
});

const dots = (d) => `<path d="${d}" stroke="#808080" stroke-dasharray="1 1" fill="none"/>`;
const chevron = (x, open) => `<path d="${open ? `M${x - 4} 6L${x} 10L${x + 4} 6` : `M${x - 2} 4L${x + 2} 8L${x - 2} 12`}" fill="none" stroke="${open ? '#404040' : '#a0a0a0'}" stroke-width="1.800"/>`;
const guide = (w, inner) => `<svg class="ic" width="${w}" height="16" viewBox="0 0 ${w} 16" aria-hidden="true">${inner}</svg>`;
const TREE_CSS = `
ul{list-style:none;margin:0;padding:0;flex:1;min-width:0;overflow:hidden}
li{display:flex;height:16px;line-height:16px;white-space:nowrap}
.n{display:flex;height:16px}
`;

const MODULES = [
  ['门窗洞', null],
  ['梁', [['beam','梁(L)'],['ring','圈梁(E)']]],
  ['板', [['slab','现浇板(B)'],['spiral','螺旋板(B)'],['cap','柱帽(V)'],['hole','板洞(N)'],['force','板受力筋(S)'],['negbar','板负筋(F)'],['strip','楼层板带(H)']]],
  ['基础', [['foundbeam','基础梁(F)'],['raft','筏板基础(M)'],['pit','集水坑(K)'],['pier','柱墩(Y)'],['rebar','筏板主筋(R)'],['negbar','筏板负筋(X)'],['isolated','独立基础(P)'],['stripf','条形基础(T)'],['pilecap','桩承台(V)'],['foundbeam','承台梁(F)'],['pile','桩(U)'],['strip','基础板带(W)']]],
  ['其它', [['pour','后浇带(JD)'],['eave','挑檐(T)'],['rail','栏板(K)'],['slab','']]]
];
const moduleRows = () => MODULES.map(([name, kids]) =>
  `<li role="treeitem">${guide(23, chevron(11, !!kids) + dots('M19 8.5H23'))}${icon(kids ? 'folderopen' : 'folder')}<span class="g">${name}</span></li>` +
  (kids || []).map(([ic, t], i) => {
    const last = i === kids.length - 1 && name !== '其它';
    return `<li role="treeitem">${guide(41, dots('M12.5 0V16') + dots(`M32.5 0V${last ? 8 : 16}`) + dots('M33 8.5H41'))}<span class="n${t === '桩承台(V)' ? ' sel' : ''}">${icon(ic)}<span>${t}</span></span></li>`;
  }).join('')).join('');

define('nav-panel', `
:host{display:flex;flex-direction:column;width:166px;flex:none;background:#f0f0f0;padding-bottom:3px;min-height:0}
header{display:flex;align-items:center;height:16px;margin-bottom:1px;background:#0453e4;color:#fff;font-size:13px;line-height:16px}
header h2{font:inherit;margin:0;flex:1}
header button{display:block;margin-left:2px;padding:0 1px}
.b{display:block;height:22px;line-height:20px;border:1px solid #a6a6a6;border-top-color:#d8d8d8;background:#f0f0f0;margin:0 2px 0 0;text-align:center;flex:none}
.box{flex:1;min-height:0;display:flex;flex-direction:column;border:1px solid #8a8f98;border-width:1px 2px 2px 1px;margin:0 2px 0 2px;background:#fff}
.tb{height:26px;flex:none;background:linear-gradient(#fff,#ececec);border-bottom:1px solid #80868f;display:flex;gap:6px;padding:6px 0 0 4px}
.v{flex:1;display:flex;min-height:0;padding:2px 1px 0 0}
scroll-bar[dir=h]{margin:0 16px 0 1px}
.hs{background:#f0f0f0;flex:none}
.g{margin-left:4px}
.n{padding:0 5px 0 1px;gap:5px}
.sel{background:#d9d9d9}
${TREE_CSS}
`, () => `<header class="sim"><h2>模块导航栏</h2><button type="button" aria-label="固定">${icon('pin',14)}</button><button type="button" aria-label="关闭面板">${icon('cross',14)}</button></header>
<button type="button" class="b">工程设置</button><button type="button" class="b">绘图输入</button>
<div class="box"><div class="tb"><button type="button" aria-label="全部展开">${icon('expand')}</button><button type="button" aria-label="全部折叠">${icon('collapse')}</button></div>
<div class="v"><ul role="tree" class="sim">${moduleRows()}</ul><scroll-bar parts="152 233 48"></scroll-bar></div><div class="hs"><scroll-bar dir="h" parts="0 102 5"></scroll-bar></div></div>
<button type="button" class="b">单构件输入</button><button type="button" class="b">报表预览</button>`);

const memberRows = () => Array.from({ length: 17 }, (_, i) => {
  const id = `CT-${85 + i}`, end = i === 16;
  return `<li role="treeitem">${guide(40, chevron(30, true) + dots('M38 8.5H40'))}<span class="n${end ? ' sel' : ''}">${icon('gear')}<span class="g">${id}</span></span></li>
<li role="treeitem">${guide(60, (end ? '' : dots('M31.5 0V16')) + dots('M50.5 0V8') + dots('M50 8.5H60'))}${icon('gear')}<span class="k">(底)${id}-1</span></li>`;
}).join('');

define('member-list', `
:host{display:flex;flex-direction:column;width:184px;flex:none;margin:4px 0 3px;background:#f0f0f0;min-height:0}
.s{display:flex;height:27px;padding:1px 0 2px;align-items:center;background:#fff;gap:4px;flex:none}
input{width:158px;height:24px;border:1px solid #828282;padding:0 2px 3px;line-height:20px;background:#fff}
input::placeholder{color:#707070;opacity:1}
.t{flex:1;min-height:0;display:flex;background:#fff;border:1px solid #80868f;border-right-width:2px;border-bottom-width:2px;padding:1px 2px 1px 0}
.n{padding:0 4px 0 0}
.g{margin-left:5px}
.n .ic{margin-left:1px}
.k{margin-left:6px}
.sel{background:#316ac5}
${TREE_CSS}
`, () => `<div class="s"><input type="text" aria-label="搜索构件" placeholder="搜索构件..."><button type="button" aria-label="搜索">${icon('search')}</button></div>
<div class="t"><ul role="tree" class="sim">${memberRows()}</ul><scroll-bar parts="434 91 0"></scroll-bar></div>`);

const PROPS = [
  ['名称','CT-101','blue',0],['长度(mm)','500','dim',1],['宽度(mm)','850','dim',1],['高度(mm)','500','dim',1],
  ['顶标高(m)','层底标高+0.5','',1],['底标高(m)','层底标高','',1],['扣减板/筏板面筋','不扣减','cur',1],['扣减板/筏板底筋','全部扣减','',1],
  ['计算设置','按默认计算设置计算','',0],['节点设置','按默认节点设置计算','',0],['搭接设置','按默认搭接设置计算','',0],
  ['保护层厚度(mm)','(40)','',0],['汇总信息','桩承台','',1],['备注','','',1],['显示样式','','dim plus',0]
];
define('property-pane', `
:host{display:flex;flex-direction:column;flex:1;min-width:0;margin:1px 0 4px 4px;position:relative}
.tabs{display:flex;height:20px;flex:none;background:#fff;border-bottom:1px solid #dcdcdc}
.tabs button{width:63px;height:20px;line-height:18px;background:#fff;border:1px solid #d0d0d0;border-bottom:0;padding-right:2px}
.body{flex:1;min-height:0;background:#fff;border-left:1px solid #dcdcdc;padding:4px 4px 2px 2px;display:flex}
.in{flex:1;border:1px solid #a8a8a8;padding:1px;overflow:hidden}
table{border-collapse:separate;border-spacing:0;table-layout:fixed;width:369px;line-height:16px}
th,td{height:19px;padding:0;font-weight:400;border:solid #c0c0c0;border-width:0 1px 1px 0;white-space:nowrap;overflow:hidden}
thead th{height:23px;background:linear-gradient(#fff,#ececec)}
thead .hot{background:linear-gradient(#fbdba0,#f0bd60);color:#5a0050}
tbody th{background:linear-gradient(#fff,#efefef)}
.nm{padding-left:20px;position:relative}
.vl{padding-left:2px}
.blue .nm{color:#00f}
.dim td{color:#808080}
.cur th{background:#ffd48a;color:#5a0050}
.cur .nm{background:#0078d7;color:#fff}
.cur .vl{background:#d9eaf9}
.ck{text-align:center}
.ck input{appearance:none;display:block;width:13px;height:13px;border:1px solid #222;margin:0 auto;background:#fff}
.px{position:absolute;left:3px;top:3px;width:12px;height:12px;border:1px solid #aaa;background:#fff;display:block}
.mark{position:absolute;left:-24px;top:149px;width:381px;height:64px;border:7px solid #f00;pointer-events:none;z-index:3}
`, () => `<div class="tabs" role="tablist"><button type="button" role="tab" class="sim">属性编辑</button></div>
<div class="body"><div class="in"><table class="sim"><colgroup><col style="width:21px"><col style="width:191px"><col style="width:126px"><col style="width:31px"></colgroup>
<thead><tr><th></th><th>属性名称</th><th class="hot">属性值</th><th>附加</th></tr></thead><tbody>${PROPS.map(([n, v, c, k], i) => `<tr class="${c}"><th>${i + 1}</th><td class="nm">${c.includes('plus') ? '<button type="button" class="px" aria-label="展开"><svg class="ic" width="10" height="10"><path d="M1 5.5H10M5.5 1V10" stroke="#000"/></svg></button>' : ''}${n}</td><td class="vl">${v}</td><td class="ck">${k ? `<input type="checkbox" aria-label="附加 ${n}">` : ''}</td></tr>`).join('')}</tbody></table></div></div><div class="mark"></div>`);

define('status-bar', `
:host{display:flex;height:20px;gap:2px;background:#f0f0f0;flex:none}
span{height:19px;line-height:17px;border:1px solid #d4d4d4;padding-left:1px;white-space:nowrap;overflow:hidden;flex:none;background:linear-gradient(#fff,#f0f0f0)}
.w{width:148px}.a{width:78px}.b{width:98px}.c{width:48px}.m{flex:1;min-width:0}.f{width:70px}
`, () => `<span class="w"></span><span class="a sim">层高:2.15m</span><span class="b sim">底标高:-2.2m</span><span class="c sim">0</span><span class="m cjk">在选择板/筏板面筋遇到此承台时，选择"全部扣减"根据节点设置锚入此承台，选择"不扣减"贯通布置，选择"隔一扣一"则断一根，贯通布置一根。</span><span class="f sim">663 FPS</span>`);

define('task-bar', `
:host{display:flex;height:40px;background:#000c10;color:#fff;flex:none}
button{display:flex;align-items:center;justify-content:center;height:40px;flex:none}
.start{width:48px;background:#000}
.find{width:344px;background:#323232;display:flex;align-items:center;padding:0 12px 0 8px;flex:none}
.find input{flex:1;min-width:0;margin-left:4px;font-size:14px;line-height:20px;height:24px}
.find input::placeholder{color:#a0a0a0;opacity:1}
.g{display:flex;gap:2px}.g button{width:48px}
.g2{gap:1px}
.run{background:linear-gradient(#76b9ed,#76b9ed) center bottom/40px 3px no-repeat}
.on{background:linear-gradient(#76b9ed,#76b9ed) bottom/100% 3px no-repeat,#343d42}
.sp{width:4px;height:16px;border:solid #555;border-width:0 1px;margin:12px 12px 0 11px}
.tray{margin-left:auto;display:flex;align-items:center}
.tray .sp{margin:0 6px 0 0}
.lnk{width:36px}.cpu,.time{text-align:center;line-height:18px}
.cpu{width:56px;margin:0 10px 0 9px}
.time{width:58px;margin-left:10px}
.i{width:24px}.i.k{width:28px}.i.m{width:30px}
.msg{width:56px;background:#000}.edge{width:5px;height:40px;border-left:1px solid #444;background:#000}
`, () => `<button type="button" class="start" aria-label="开始">${icon('win')}</button>
<div class="find"><svg class="ic" width="24" height="24" viewBox="0 0 24 24"><circle cx="12" cy="12" r="9" fill="none" stroke="#fff" stroke-width="2.600"/></svg><input type="text" aria-label="搜索" placeholder="在这里输入你要搜索的内容">${icon('micline',17)}</div>
<div class="g"><button type="button" aria-label="任务视图">${icon('taskview',21,18)}</button>${['pinwheel','ewhite','swirl'].map(n => `<button type="button" aria-label="${n}">${icon(n, n === 'swirl' ? 20 : 22)}</button>`).join('')}</div><i class="sp"></i>
<div class="g g2"><button type="button" aria-label="Edge">${icon('edge',20)}</button><button type="button" aria-label="IE">${icon('ie',24)}</button><button type="button" aria-label="文件资源管理器">${icon('explorer',22)}</button><button type="button" class="run" aria-label="浏览器">${icon('egreen',23)}</button><button type="button" class="on" aria-label="广联达">${icon('logo',24)}</button><button type="button" class="run" aria-label="编辑器">${icon('editor',24)}</button></div>
<div class="tray"><i class="sp"></i><button type="button" class="lnk">链接</button><div class="cpu">10%<br>CPU使用</div>
<button type="button" class="i" aria-label="显示隐藏的图标">${icon('caret')}</button><button type="button" class="i" aria-label="电源">${icon('battery')}</button><button type="button" class="i" aria-label="网络">${icon('wifi')}</button><button type="button" class="i" aria-label="音量">${icon('speaker')}</button><button type="button" class="i k" aria-label="键盘">${icon('kbd',23,16)}</button><button type="button" class="i k" aria-label="输入法">${icon('zhongw',15)}</button><button type="button" class="i m" aria-label="搜狗">${icon('sogou',15)}</button>
<div class="time">11:36<br>2018/5/5</div><button type="button" class="msg" aria-label="操作中心">${icon('note',18)}</button><i class="edge"></i></div>`);

define('app-window', `
:host{display:flex;flex-direction:column;height:100vh;min-height:700px;background:#f0f0f0}
.work{flex:1;min-height:0;display:flex;gap:5px;margin-top:1px}
.right{flex:1;min-width:0;display:flex;flex-direction:column}
.panes{flex:1;min-height:0;display:flex}
`, () => `<title-bar></title-bar><menu-bar></menu-bar><main-tools></main-tools>
<div class="work"><nav-panel></nav-panel><div class="right"><component-tools></component-tools><div class="panes"><member-list></member-list><property-pane></property-pane></div></div></div>
<status-bar></status-bar><task-bar></task-bar>`);
</script>
</body>
</html>
